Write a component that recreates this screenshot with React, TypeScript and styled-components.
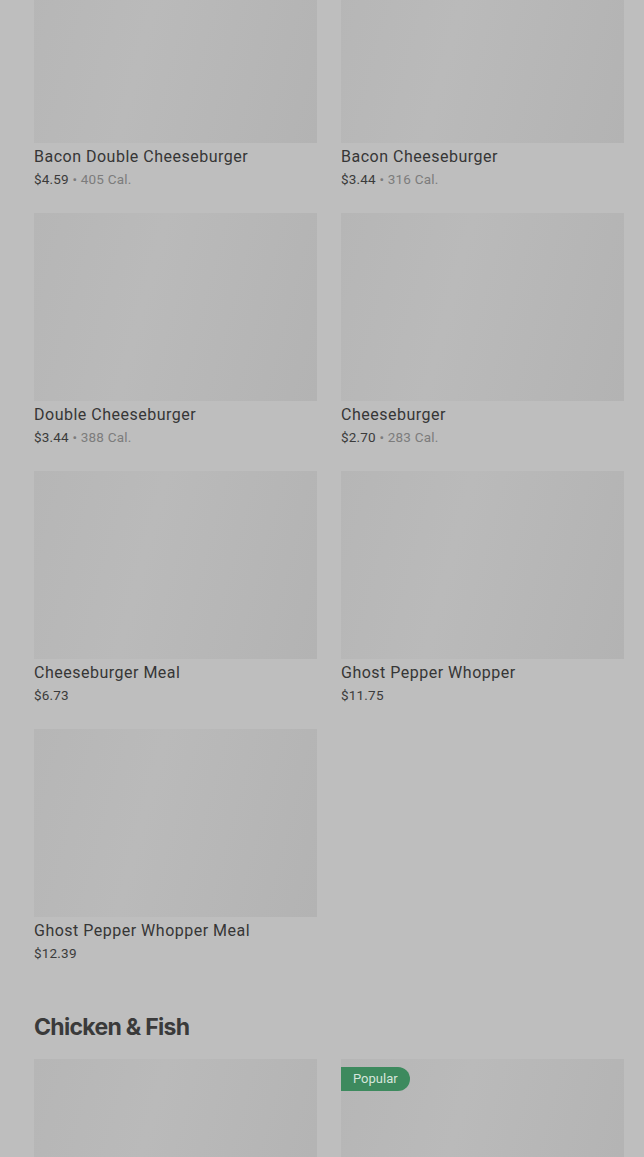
import React, { FC } from "react";
import styled, { createGlobalStyle } from "styled-components";

interface Item {
  name: string;
  price: string;
  cal?: string;
  popular?: boolean;
}

const burgers: Item[] = [
  { name: "Bacon Double Cheeseburger", price: "$4.59", cal: "405 Cal." },
  { name: "Bacon Cheeseburger", price: "$3.44", cal: "316 Cal." },
  { name: "Double Cheeseburger", price: "$3.44", cal: "388 Cal." },
  { name: "Cheeseburger", price: "$2.70", cal: "283 Cal." },
  { name: "Cheeseburger Meal", price: "$6.73" },
  { name: "Ghost Pepper Whopper", price: "$11.75" },
  { name: "Ghost Pepper Whopper Meal", price: "$12.39" },
];

const chicken: Item[] = [
  { name: "", price: "" },
  { name: "", price: "", popular: true },
];

const GlobalStyle = createGlobalStyle`
  html, body {
    margin: 0;
    padding: 0;
    background: #bebebe;
    overflow: hidden;
  }
  body {
    font-family: Roboto, "Liberation Sans", Arial, sans-serif;
  }
`;

const Page = styled.div`
  height: 1157px;
  overflow: hidden;
  padding: 0 20px 0 34px;
`;
const Scroll = styled.div`
  margin-top: -45px;
`;
const Grid = styled.div`
  display: grid;
  grid-template-columns: 283px 283px;
  column-gap: 24px;
  row-gap: 25px;
`;
const Card = styled.div`
  position: relative;
  display: flex;
  flex-direction: column;
`;
const Thumb = styled.div`
  height: 188px;
  background: linear-gradient(105deg, #b6b6b6 0%, #bababa 40%, #b3b3b3 100%);
`;
const Name = styled.div`
  margin-top: 4px;
  font-size: 16px;
  line-height: 20px;
  color: #363636;
  letter-spacing: 0.5px;
`;
const Meta = styled.div`
  margin-top: 3px;
  font-size: 13.5px;
  line-height: 18px;
  color: #3b3b3b;
  letter-spacing: 0.2px;
`;
const Cal = styled.span`
  color: #7c7c7c;
`;
const Heading = styled.h2`
  margin: 50px 0 17px;
  font-family: Inter, "Noto Sans", sans-serif;
  font-size: 23px;
  font-weight: 700;
  letter-spacing: -0.7px;
  line-height: 30px;
  color: #3a3a3a;
`;
const Badge = styled.span`
  position: absolute;
  top: 8px;
  left: 0;
  height: 24px;
  padding: 0 12px;
  border-radius: 0 12px 12px 0;
  background: #3d8a5e;
  color: #d6e6dc;
  font-size: 13px;
  line-height: 24px;
`;

const MenuCard: FC<{ item: Item }> = ({ item }) => (
  <Card>
    <Thumb />
    {item.popular && <Badge>Popular</Badge>}
    {item.name && <Name>{item.name}</Name>}
    {item.price && (
      <Meta>
        {item.price}
        {item.cal && <Cal> • {item.cal}</Cal>}
      </Meta>
    )}
  </Card>
);

const App: FC = () => (
  <>
    <GlobalStyle />
    <Page>
      <Scroll>
        <Grid>
          {burgers.map((item, i) => (
            <MenuCard key={i} item={item} />
          ))}
        </Grid>
        <Heading>Chicken &amp; Fish</Heading>
        <Grid>
          {chicken.map((item, i) => (
            <MenuCard key={i} item={item} />
          ))}
        </Grid>
      </Scroll>
    </Page>
  </>
);

export default App;
